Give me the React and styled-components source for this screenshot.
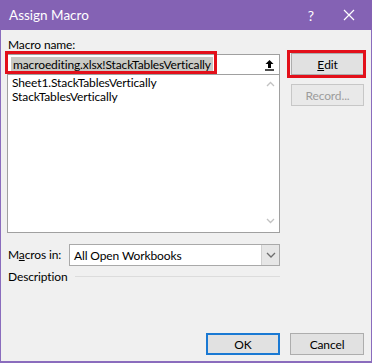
import React from "react";
import styled, { createGlobalStyle } from "styled-components";

const Global = createGlobalStyle`
  html, body { margin: 0; padding: 0; background: #f0f0f0; }
  body {
    font-family: Lato, "Noto Sans", sans-serif;
    font-size: 12px;
    letter-spacing: -0.12px;
    color: #000;
  }
`;

const Window = styled.div`
  width: 372px;
  height: 363px;
  box-sizing: border-box;
  display: flex;
  flex-direction: column;
  border: 1px solid #8a6cbd;
  border-top: none;
  border-bottom-width: 2px;
  background: #f0f0f0;
`;

const TitleBar = styled.div`
  height: 30px;
  margin: 0 -1px;
  background: #8462b4;
  color: #fff;
  display: flex;
  align-items: center;
  padding-left: 9px;
  font-size: 13.5px;
  letter-spacing: 0;
`;

const Title = styled.span`
  flex: 1;
  margin-top: -1px;
`;

const TitleButton = styled.span`
  width: ${(p) => p.$w}px;
  display: flex;
  justify-content: center;
  align-items: center;
  font-size: 14px;
`;

const Body = styled.div`
  flex: 1;
  display: flex;
  flex-direction: column;
  padding: 7px 6px 6px 6px;
`;

const Main = styled.div`
  display: grid;
  grid-template-columns: 273px 73px;
  column-gap: 11px;
`;

const Column = styled.div`
  display: flex;
  flex-direction: column;
  padding-top: ${(p) => p.$top || 0}px;
`;

const Label = styled.div`
  height: 16px;
  line-height: 16px;
  padding-left: 1px;
  white-space: nowrap;
`;

const Annotated = styled.div`
  position: relative;
`;

const RedBox = styled.div`
  position: absolute;
  border: 3px solid #e3101a;
  pointer-events: none;
  top: ${(p) => p.$t}px;
  left: ${(p) => p.$l}px;
  width: ${(p) => p.$w}px;
  height: ${(p) => p.$h}px;
  box-sizing: border-box;
`;

const NameField = styled.div`
  margin-top: 1px;
  height: 20px;
  box-sizing: border-box;
  border: 1px solid #a0a0a0;
  border-bottom: none;
  background: #fff;
  display: flex;
  align-items: center;
  padding-left: 3px;
`;

const Selected = styled.span`
  background: #c9c9c4;
  padding: 0 2px;
  line-height: 15px;
  white-space: nowrap;
`;

const Spacer = styled.div`
  flex: 1;
`;

const PickButton = styled.div`
  width: 19px;
  height: 19px;
  display: flex;
  align-items: center;
  justify-content: center;
`;

const ListBox = styled.div`
  height: 159px;
  box-sizing: border-box;
  border: 1px solid #a0a0a0;
  background: #fff;
  display: flex;
`;

const Items = styled.div`
  flex: 1;
  padding: 1px 0 0 4px;
  line-height: 14px;
`;

const ScrollBar = styled.div`
  width: 17px;
  display: flex;
  flex-direction: column;
  justify-content: space-between;
  align-items: center;
  padding: 6px 0 8px;
  background: #fff;
`;

const Row = styled.div`
  display: flex;
  align-items: center;
  margin-top: ${(p) => p.$mt || 0}px;
`;

const SelectBox = styled.div`
  margin-left: auto;
  width: 211px;
  height: 22px;
  box-sizing: border-box;
  border: 1px solid #a9a9a9;
  background: #fff;
  display: flex;
  align-items: center;
  padding-left: 4px;
`;

const SelectArrow = styled.div`
  width: 17px;
  height: 20px;
  background: #e6e6e6;
  border-left: 1px solid #d0d0d0;
  display: flex;
  align-items: center;
  justify-content: center;
`;

const Rule = styled.div`
  flex: 1;
  height: 1px;
  background: #dcdcdc;
  margin: 0 0 1px 7px;
`;

const Button = styled.div`
  width: ${(p) => p.$w || 73}px;
  height: 22px;
  box-sizing: border-box;
  display: flex;
  align-items: center;
  justify-content: center;
  background: ${(p) => (p.$disabled ? "#e9e9e9" : "#e1e1e1")};
  color: ${(p) => (p.$disabled ? "#9c9c9c" : "#000")};
  border: ${(p) => (p.$default ? "2px solid #1a79d3" : `1px solid ${p.$disabled ? "#c7c7c7" : "#adadad"}`)};
  margin-top: ${(p) => p.$mt || 0}px;
`;

const Footer = styled.div`
  margin-top: auto;
  display: flex;
  justify-content: flex-end;
  gap: 10px;
  padding-right: 1px;
`;

const Chevron = ({ up }) => (
  <svg width="9" height="6" viewBox="0 0 9 6">
    <path
      d={up ? "M1 5 L4.5 1.5 L8 5" : "M1 1 L4.5 4.5 L8 1"}
      fill="none"
      stroke="#c2c2c2"
      strokeWidth="1.3"
    />
  </svg>
);

const macros = ["Sheet1.StackTablesVertically", "StackTablesVertically"];

export default function App() {
  return (
    <>
      <Global />
      <Window>
        <TitleBar>
          <Title>Assign Macro</Title>
          <TitleButton $w={30}>?</TitleButton>
          <TitleButton $w={46}>
            <svg width="12" height="12" viewBox="0 0 12 12">
              <path d="M1 1 L11 11 M11 1 L1 11" stroke="#fff" strokeWidth="1.2" />
            </svg>
          </TitleButton>
        </TitleBar>
        <Body>
          <Main>
            <Column>
              <Label>Macro name:</Label>
              <Annotated>
                <RedBox $t={-2} $l={-2} $w={212} $h={23} />
                <NameField>
                  <Selected>macroediting.xlsx!StackTablesVertically</Selected>
                  <Spacer />
                  <PickButton>
                    <svg width="11" height="12" viewBox="0 0 11 12">
                      <path d="M5.5 1 L1.5 5 H4 V9 H7 V5 H9.5 Z" fill="#000" />
                      <path d="M1 11 H10" stroke="#000" strokeWidth="1.4" />
                    </svg>
                  </PickButton>
                </NameField>
              </Annotated>
              <ListBox>
                <Items>
                  {macros.map((m) => (
                    <div key={m}>{m}</div>
                  ))}
                </Items>
                <ScrollBar>
                  <Chevron up />
                  <Chevron />
                </ScrollBar>
              </ListBox>
              <Row $mt={11}>
                <Label>
                  M<u>a</u>cros in:
                </Label>
                <SelectBox>
                  All Open Workbooks
                  <Spacer />
                  <SelectArrow>
                    <svg width="10" height="6" viewBox="0 0 10 6">
                      <path d="M1 1 L5 5 L9 1" fill="none" stroke="#6d6d6d" strokeWidth="1.3" />
                    </svg>
                  </SelectArrow>
                </SelectBox>
              </Row>
              <Row $mt={3}>
                <Label>Description</Label>
                <Rule />
              </Row>
            </Column>
            <Column $top={16}>
              <Annotated>
                <RedBox $t={-3} $l={-4} $w={79} $h={28} />
                <Button>
                  <u>E</u>dit
                </Button>
              </Annotated>
              <Button $mt={9} $disabled>
                Record...
              </Button>
            </Column>
          </Main>
          <Footer>
            <Button $default $w={74}>OK</Button>
            <Button $w={74}>Cancel</Button>
          </Footer>
        </Body>
      </Window>
    </>
  );
}
